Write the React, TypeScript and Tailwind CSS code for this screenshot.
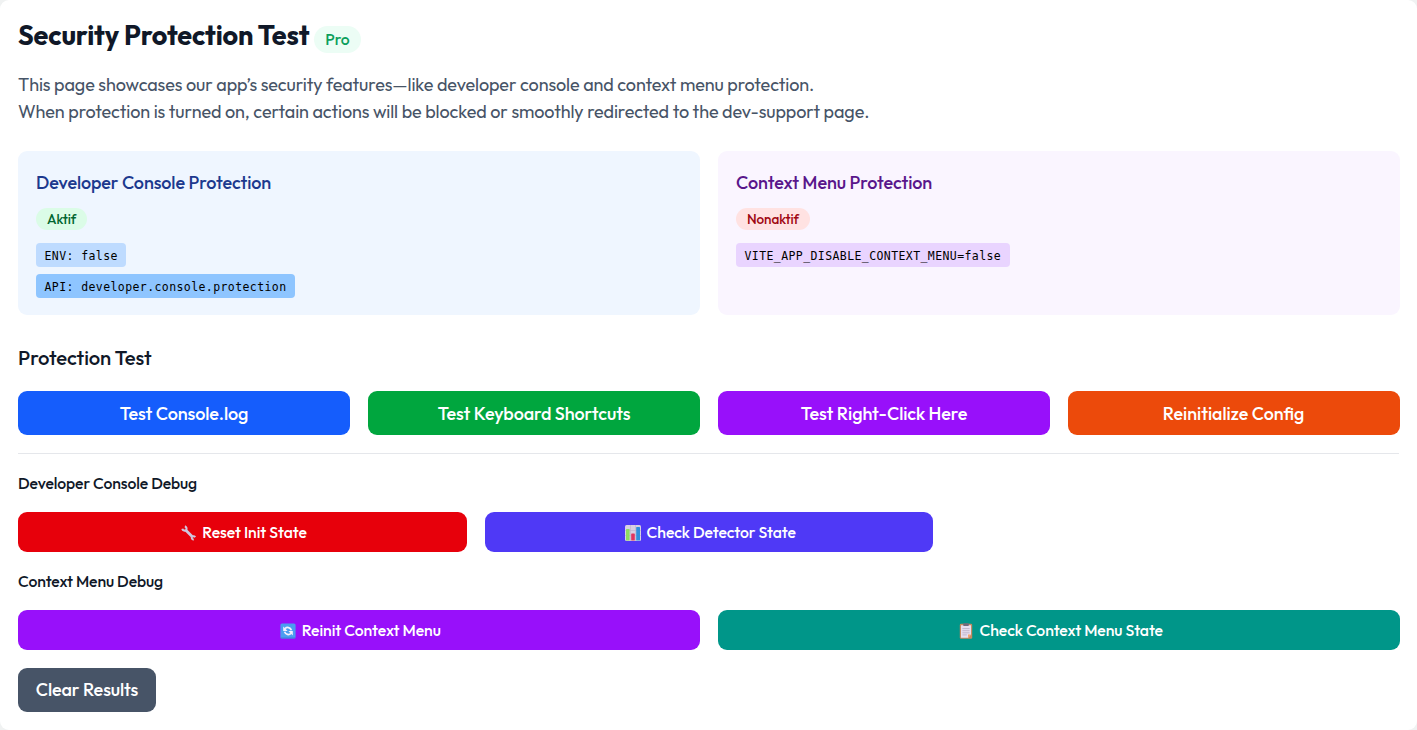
import type { ReactNode } from "react";

function ActionButton({ className, children }: { className: string; children: ReactNode }) {
  return (
    <button type="button" className={`rounded-[9px] text-center font-medium text-white ${className}`}>
      {children}
    </button>
  );
}

function IconLabel({ icon, children }: { icon: ReactNode; children: ReactNode }) {
  return (
    <span className="flex items-center justify-center gap-[5.5px] pl-[3px]">
      {icon}
      <span>{children}</span>
    </span>
  );
}

function WrenchIcon() {
  return (
    <svg className="size-4" viewBox="0 0 16 16" fill="none" stroke="#cfc6df" aria-hidden="true">
      <path d="M4.6 5 L11.6 12" strokeWidth="2.8" />
      <path d="M1.3 3.7 C1.8 5.6 4.2 6.2 5.2 4.9 C6 3.9 5.4 1.9 3.9 1.3" strokeWidth="2.1" />
      <path d="M14.3 12.2 C13.3 10.9 11.3 10.9 10.8 12.2 C10.4 13.4 11.4 14.6 12.8 14.5" strokeWidth="1.9" />
    </svg>
  );
}

function ChartIcon() {
  return (
    <svg className="size-4" viewBox="0 0 16 16" aria-hidden="true">
      <rect width="16" height="16" rx="1.5" fill="#d8d0e2" />
      <path d="M0 5.5H16M0 10.5H16M5.5 0V16M10.5 0V16" stroke="#bdb2cd" strokeWidth=".6" />
      <rect x="1" y="4" width="3.6" height="11.5" rx=".6" fill="#8edb62" />
      <rect x="6.2" y="8.5" width="3.6" height="7" rx=".6" fill="#e0345f" />
      <rect x="11.2" y="2" width="3.8" height="13.5" rx=".6" fill="#2f8fdc" />
    </svg>
  );
}

function RefreshIcon() {
  return (
    <svg className="size-4" viewBox="0 0 16 16" fill="none" aria-hidden="true">
      <rect x=".4" y=".4" width="15.2" height="15.2" rx="1.6" fill="#4a9df0" />
      <path d="M1 15H15" stroke="#3b7fd6" strokeWidth="1" />
      <path d="M5 5.6C7 3.7 10.3 4.1 11.4 7.2M11 10.4C9 12.3 5.7 11.9 4.6 8.8" stroke="#f3f0ff" strokeWidth="1.8" />
      <path d="M3.2 3.6V8H7.6ZM12.8 12.4V8H8.4Z" fill="#f3f0ff" />
    </svg>
  );
}

function ClipboardIcon() {
  return (
    <svg className="size-4" viewBox="0 0 16 16" aria-hidden="true">
      <rect x="1.8" y=".8" width="12.4" height="15" rx="1.3" fill="#c78a62" />
      <path d="M3 2.2H13V11.6L10 14.8H3Z" fill="#e6dff0" />
      <path d="M10 14.8V11.6H13Z" fill="#f3a469" />
      <rect x="5.2" y=".2" width="5.6" height="2.8" rx=".8" fill="#716a7d" />
      <path d="M4.4 5.6H11.6M4.4 7.7H11.6M4.4 9.8H11.6M4.4 11.9H8.8" stroke="#b5abc2" strokeWidth=".8" />
    </svg>
  );
}

function Code({ className, children }: { className: string; children: ReactNode }) {
  return (
    <code
      className={`h-6 w-fit rounded-[4px] pr-[8.5px] pl-[8.5px] pt-px font-['DejaVu_Sans_Mono',monospace] text-[11.5px] leading-6 tracking-[0.41px] text-black ${className}`}
    >
      {children}
    </code>
  );
}

function StatusCard({
  className,
  titleClass,
  title,
  badgeClass,
  badge,
  children,
}: {
  className: string;
  titleClass: string;
  title: string;
  badgeClass: string;
  badge: string;
  children: ReactNode;
}) {
  return (
    <section className={`h-[164px] rounded-[9px] p-[18px] ${className}`}>
      <h2 className={`text-[18px] leading-[27px] font-medium tracking-[-0.1px] ${titleClass}`}>{title}</h2>
      <div
        className={`mt-3 h-[22px] w-fit rounded-full px-[11px] text-[13.5px] leading-[22px] font-medium tracking-[-0.1px] ${badgeClass}`}
      >
        {badge}
      </div>
      <div className="mt-[13px] flex flex-col gap-[7px]">{children}</div>
    </section>
  );
}

export default function App() {
  return (
    <div className="h-[730px] bg-[#f0f2f2] font-['Outfit','Lato',sans-serif]">
      <main className="h-full rounded-[9px] bg-white pr-[17px] pl-[18px]">
        <header className="flex h-[71px] items-start gap-[5px] pt-[17px]">
          <h1 className="text-[27px] leading-9 font-bold tracking-[-0.14px] text-gray-900">Security Protection Test</h1>
          <span className="mt-[9px] h-[27px] rounded-full bg-emerald-50 px-[11px] text-[15.75px] leading-[27px] font-medium tracking-[-0.1px] text-[#0c9f5c]">
            Pro
          </span>
        </header>
        <p className="h-20 text-[18px] leading-[27px] tracking-[-0.1px] text-[#475467]">
          This page showcases our app’s security features—like developer console and context menu protection.
          <br />
          When protection is turned on, certain actions will be blocked or smoothly redirected to the dev-support page.
        </p>

        <div className="grid grid-cols-2 gap-[18px]">
          <StatusCard
            className="bg-blue-50"
            titleClass="text-blue-900"
            title="Developer Console Protection"
            badgeClass="bg-green-100 text-green-800"
            badge="Aktif"
          >
            <Code className="bg-blue-200">ENV: false</Code>
            <Code className="bg-blue-300">API: developer.console.protection</Code>
          </StatusCard>
          <StatusCard
            className="bg-purple-50"
            titleClass="text-purple-900"
            title="Context Menu Protection"
            badgeClass="bg-red-100 text-red-800"
            badge="Nonaktif"
          >
            <Code className="bg-purple-200">VITE_APP_DISABLE_CONTEXT_MENU=false</Code>
          </StatusCard>
        </div>

        <h2 className="mt-[27px] h-[49px] text-[20.25px] leading-8 font-medium tracking-[-0.1px] text-gray-900">
          Protection Test
        </h2>
        <div className="grid grid-cols-4 gap-[18px] text-[18px] tracking-[-0.1px]">
          <ActionButton className="h-11 bg-blue-600">Test Console.log</ActionButton>
          <ActionButton className="h-11 bg-green-600">Test Keyboard Shortcuts</ActionButton>
          <ActionButton className="h-11 bg-purple-600">Test Right-Click Here</ActionButton>
          <ActionButton className="h-11 bg-[#ec4a0b] pt-0.5 pr-px text-[17.85px] tracking-normal">
            Reinitialize Config
          </ActionButton>
        </div>

        <hr className="mt-[18px] mr-px border-gray-200" />

        <h3 className="mt-[17px] h-[41px] text-[15.75px] leading-6 font-medium tracking-[-0.1px] text-gray-900">
          Developer Console Debug
        </h3>
        <div className="grid grid-cols-3 gap-[18px] text-[15.75px] tracking-[-0.06px]">
          <ActionButton className="h-10 bg-red-600 pt-px">
            <IconLabel icon={<WrenchIcon />}>Reset Init State</IconLabel>
          </ActionButton>
          <ActionButton className="h-10 bg-indigo-600 pt-px">
            <IconLabel icon={<ChartIcon />}>Check Detector State</IconLabel>
          </ActionButton>
        </div>

        <h3 className="mt-[17px] h-[41px] text-[15.75px] leading-6 font-medium tracking-[-0.1px] text-gray-900">
          Context Menu Debug
        </h3>
        <div className="grid grid-cols-2 gap-[18px] text-[15.75px] tracking-[-0.06px]">
          <ActionButton className="h-10 bg-purple-600 pt-px">
            <IconLabel icon={<RefreshIcon />}>Reinit Context Menu</IconLabel>
          </ActionButton>
          <ActionButton className="h-10 bg-teal-600 pt-px">
            <IconLabel icon={<ClipboardIcon />}>Check Context Menu State</IconLabel>
          </ActionButton>
        </div>

        <ActionButton className="mt-[18px] h-11 w-[138px] bg-[#475467] pb-0.5 text-[18px] tracking-[-0.1px]">
          Clear Results
        </ActionButton>
      </main>
    </div>
  );
}
